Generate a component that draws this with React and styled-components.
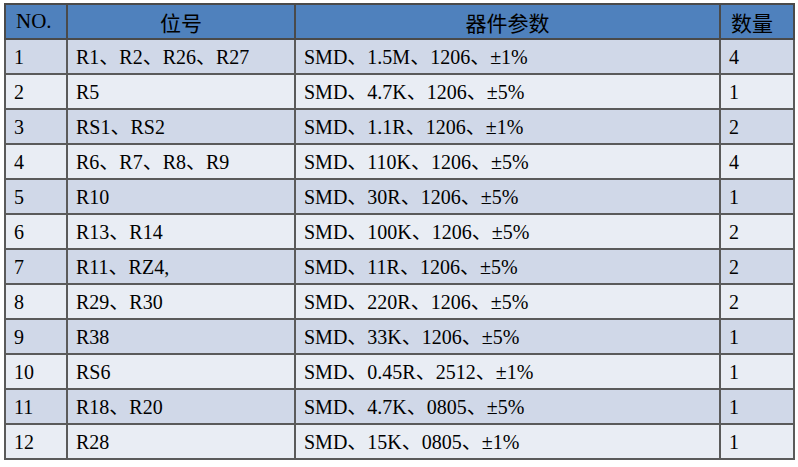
import styled, { createGlobalStyle } from "styled-components";

const GlobalStyle = createGlobalStyle`
  body {
    margin: 0;
    background: #ffffff;
    font-family: "Liberation Serif", "Noto Sans CJK SC", serif;
  }
`;

const Page = styled.div`
  padding: 3px 0 0 4px;
`;

const Table = styled.table`
  border-collapse: collapse;
  table-layout: fixed;
  width: 789px;
  font-size: 20px;
  color: #000;
`;

const HeadCell = styled.th`
  background: #4f81bd;
  border: 2px solid #4a4a4a;
  height: 33px;
  padding: 0 0 0 ${(p) => (p.$left ? "10px" : "0")};
  font-weight: normal;
  font-size: 21px;
  text-align: ${(p) => (p.$left ? "left" : "center")};
  font-family: "Liberation Serif", "Noto Sans CJK SC", serif;
`;

const Row = styled.tr`
  background: ${(p) => (p.$odd ? "#d0d8e8" : "#e9edf4")};
`;

const Cell = styled.td`
  border: 2px solid #5a5a5a;
  height: 33px;
  padding: 0 0 0 8px;
  white-space: nowrap;
  line-height: 1;
`;

const rows = [
  ["1", "R1、R2、R26、R27", "SMD、1.5M、1206、±1%", "4"],
  ["2", "R5", "SMD、4.7K、1206、±5%", "1"],
  ["3", "RS1、RS2", "SMD、1.1R、1206、±1%", "2"],
  ["4", "R6、R7、R8、R9", "SMD、110K、1206、±5%", "4"],
  ["5", "R10", "SMD、30R、1206、±5%", "1"],
  ["6", "R13、R14", "SMD、100K、1206、±5%", "2"],
  ["7", "R11、RZ4,", "SMD、11R、1206、±5%", "2"],
  ["8", "R29、R30", "SMD、220R、1206、±5%", "2"],
  ["9", "R38", "SMD、33K、1206、±5%", "1"],
  ["10", "RS6", "SMD、0.45R、2512、±1%", "1"],
  ["11", "R18、R20", "SMD、4.7K、0805、±5%", "1"],
  ["12", "R28", "SMD、15K、0805、±1%", "1"],
];

export default function App() {
  return (
    <Page>
      <GlobalStyle />
      <Table>
        <colgroup>
          <col style={{ width: 62 }} />
          <col style={{ width: 228 }} />
          <col style={{ width: 425 }} />
          <col style={{ width: 74 }} />
        </colgroup>
        <thead>
          <tr>
            <HeadCell $left>NO.</HeadCell>
            <HeadCell>位号</HeadCell>
            <HeadCell>器件参数</HeadCell>
            <HeadCell $left>数量</HeadCell>
          </tr>
        </thead>
        <tbody>
          {rows.map((r, i) => (
            <Row key={r[0]} $odd={i % 2 === 0}>
              {r.map((c, j) => (
                <Cell key={j}>{c}</Cell>
              ))}
            </Row>
          ))}
        </tbody>
      </Table>
    </Page>
  );
}
